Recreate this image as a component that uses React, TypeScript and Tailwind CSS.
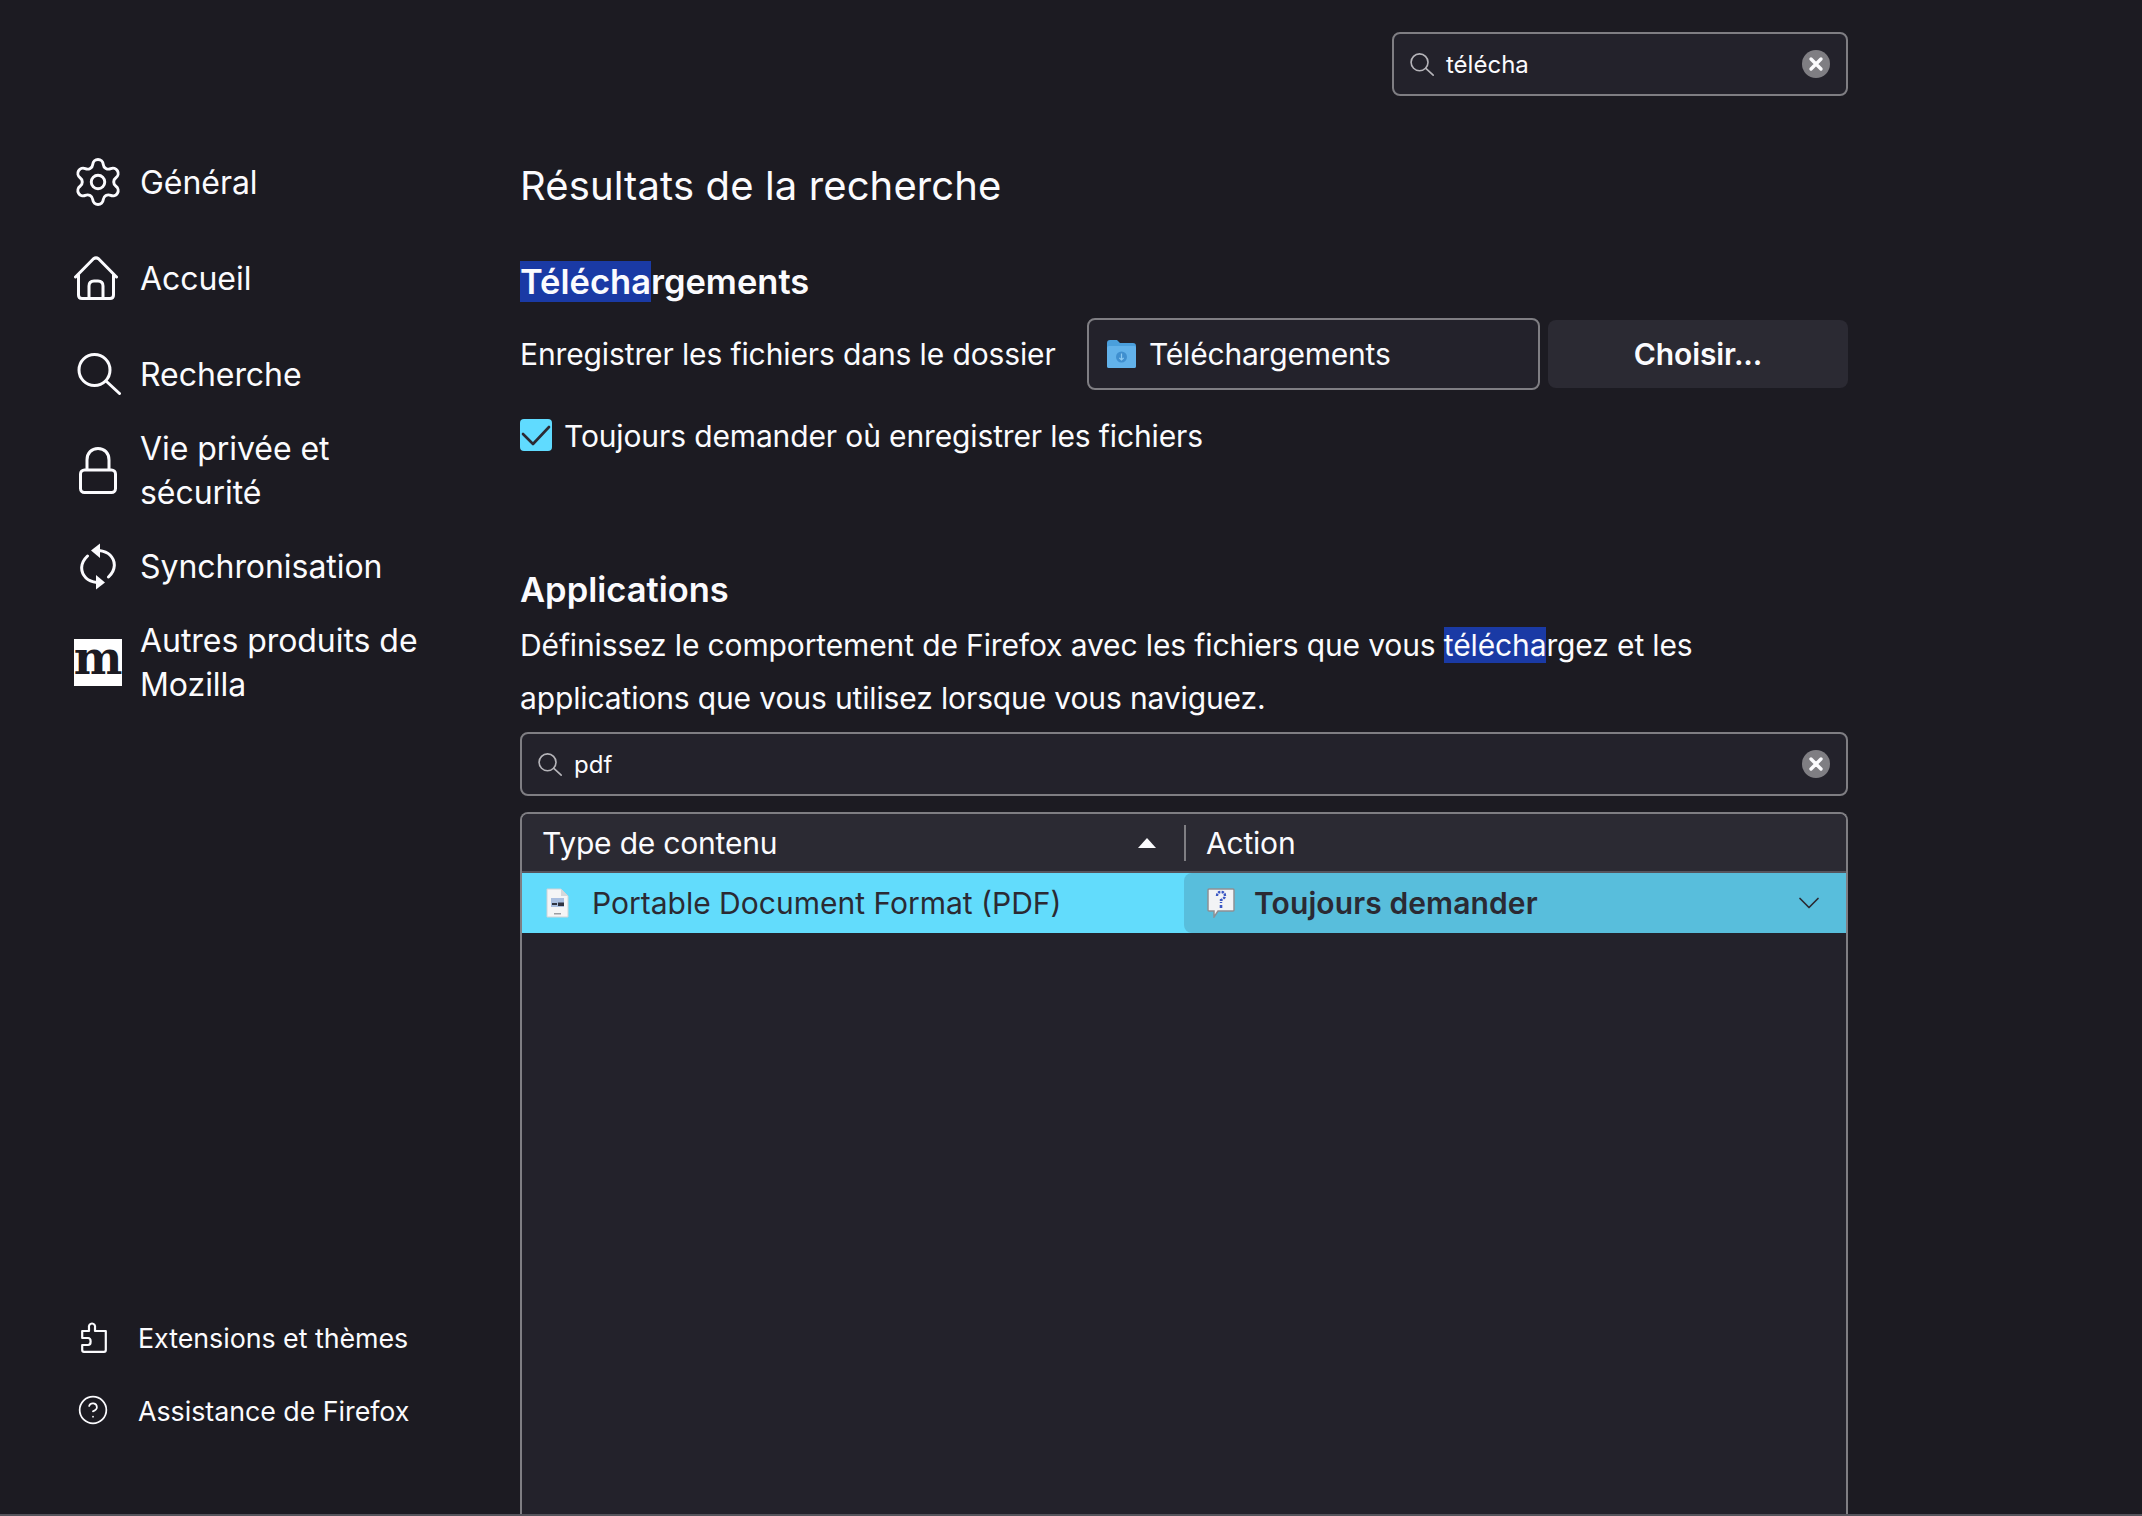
import { CircleHelp, Settings, ChevronDown } from "lucide-react";

function GlassIcon({ className }: { className: string }) {
  return (
    <svg viewBox="0 0 44 42" className={className} fill="none" stroke="currentColor" strokeWidth="3" strokeLinecap="round">
      <circle cx="17.5" cy="17" r="15.5" />
      <path d="M29 28 L42.5 40.5" />
    </svg>
  );
}

function HomeIcon() {
  return (
    <svg viewBox="0 0 44 44" className="w-[44px] h-[44px] -ml-[4px]" fill="none" stroke="currentColor" strokeWidth="3" strokeLinecap="round" strokeLinejoin="round">
      <path d="M1.5 21 L19.5 2.8 Q22 1 24.5 2.8 L42.5 21" />
      <path d="M4.5 19 V39 Q4.5 42.5 8 42.5 H36 Q39.5 42.5 39.5 39 V19" />
      <path d="M15 42 V30 Q15 25 20 25 H24 Q29 25 29 30 V42" />
    </svg>
  );
}

function LockIcon() {
  return (
    <svg viewBox="0 0 38 47" className="w-[38px] h-[47px]" fill="none" stroke="currentColor" strokeWidth="3" strokeLinejoin="round">
      <path d="M8 23 V13 C8 6 12.5 1.5 19 1.5 C25.5 1.5 30 6 30 13 V23" />
      <rect x="1.5" y="23" width="35" height="22.5" rx="4" />
    </svg>
  );
}

function SyncIcon() {
  return (
    <svg viewBox="0 0 36 47" className="w-[36px] h-[47px]" fill="none" stroke="currentColor" strokeWidth="3" strokeLinecap="round">
      <path d="M7.5 13 C0 20 0 29 6 35 C9 38 13 39 17 39.5" />
      <path d="M28.5 34 C36 27 36 18 30 12 C27 9 23 8 19 7.5" />
      <path d="M20 0.5 L20 15 L11 7.5 Z" fill="currentColor" stroke="none" />
      <path d="M16 32 L16 46.5 L25 39.5 Z" fill="currentColor" stroke="none" />
    </svg>
  );
}

function PuzzleIcon() {
  return (
    <svg viewBox="0 0 26 32" className="w-[26px] h-[32px] ml-[2px]" fill="none" stroke="currentColor" strokeWidth="2.2" strokeLinejoin="round">
      <path d="M1.2 10 H8 V7 C6.8 1 15.2 1 14 7 V10 H24.8 V29 Q24.8 30.8 23 30.8 H3 Q1.2 30.8 1.2 29 V24 H7 C10.5 24 10.5 17 7 17 H1.2 Z" />
    </svg>
  );
}

function ClearButton() {
  return (
    <svg viewBox="0 0 28 28" className="w-[28px] h-[28px] shrink-0">
      <circle cx="14" cy="14" r="14" fill="#7f7e83" />
      <path d="M9 9 L19 19 M19 9 L9 19" stroke="#fbfbfe" strokeWidth="3.4" strokeLinecap="round" />
    </svg>
  );
}

function FolderIcon() {
  return (
    <svg viewBox="0 0 29 28" className="w-[29px] h-[28px] shrink-0">
      <path d="M0 3 Q0 0 3 0 H10 L13 3 H26 Q29 3 29 6 V26 Q29 28 27 28 H2 Q0 28 0 26 Z" fill="#4a9fdc" />
      <rect x="0" y="6" width="29" height="22" rx="2" fill="#62b2ea" />
      <circle cx="14.5" cy="17" r="5.5" fill="#3f8fcf" />
      <path d="M14.5 13.5 V19.5 M12.3 17.8 L14.5 20 L16.7 17.8" stroke="#8ccaf2" strokeWidth="1.2" fill="none" />
    </svg>
  );
}

function PdfIcon() {
  return (
    <svg viewBox="0 0 23 30" className="w-[23px] h-[30px] shrink-0">
      <path d="M1 1 H15 L22 8 V29 H1 Z" fill="#f4f5f6" stroke="#cfd3d6" strokeWidth="1" />
      <path d="M15 1 V8 H22 Z" fill="#d4d8db" />
      <rect x="5" y="10" width="13" height="9" fill="#a9bfe0" />
      <rect x="6" y="15" width="5" height="2" fill="#2f3340" />
      <rect x="12" y="14.5" width="6" height="3.5" fill="#2f3340" />
      <rect x="8" y="25" width="7" height="1.5" fill="#9a9ea3" />
    </svg>
  );
}

function BubbleIcon() {
  return (
    <svg viewBox="0 0 28 30" className="w-[28px] h-[30px] shrink-0">
      <path d="M2 1 H26 Q27 1 27 2 V22 Q27 23 26 23 H11 L7 29 V23 H2 Q1 23 1 22 V2 Q1 1 2 1 Z" fill="#f2f3f5" stroke="#8d9094" strokeWidth="1.5" />
      <path d="M10 8 Q10 4 14 4 Q18 4 18 8 Q18 10 14 12 V15" stroke="#3b57c4" strokeWidth="2.4" fill="none" strokeDasharray="2.4 1" />
      <rect x="12.7" y="17" width="2.6" height="3" fill="#3b57c4" />
    </svg>
  );
}

function NavItem({ icon, label }: { icon: React.ReactNode; label: React.ReactNode }) {
  return (
    <div className="h-[96px] flex items-center">
      <div className="w-[48px] h-[60px] ml-[74px] mr-[18px] flex items-center justify-center shrink-0">{icon}</div>
      <span className="text-[32px] leading-[44px] w-[300px] pt-[2px] tracking-[-0.05px]">{label}</span>
    </div>
  );
}

function FooterItem({ icon, label }: { icon: React.ReactNode; label: string }) {
  return (
    <div className="h-[73px] flex items-center">
      <div className="w-[32px] ml-[77px] mr-[29px] flex justify-center shrink-0">{icon}</div>
      <span className="text-[26.8px] leading-[40px] pt-[2px] tracking-[-0.03px]">{label}</span>
    </div>
  );
}

export default function App() {
  return (
    <div className="h-[1516px] w-[2142px] overflow-hidden flex flex-col bg-[#1c1b22] text-[#fbfbfe] font-['Inter',sans-serif]">
      <div className="flex-1 min-h-0 flex">
        <aside className="w-[520px] shrink-0 flex flex-col justify-between pt-[134px] pb-[68px]">
          <nav className="flex flex-col">
            <NavItem icon={<Settings className="w-[54px] h-[58px] shrink-0" strokeWidth={1.3} />} label="Général" />
            <NavItem icon={<HomeIcon />} label="Accueil" />
            <NavItem icon={<GlassIcon className="w-[44px] h-[42px] ml-[2px]" />} label="Recherche" />
            <NavItem icon={<LockIcon />} label="Vie privée et sécurité" />
            <NavItem icon={<SyncIcon />} label="Synchronisation" />
            <NavItem
              icon={
                <div className="w-[48px] h-[47px] bg-white flex items-center justify-center">
                  <span className="font-['DejaVu_Serif',serif] font-bold text-[46px] leading-[47px] text-[#1c1b22] -mt-[8px]">m</span>
                </div>
              }
              label="Autres produits de Mozilla"
            />
          </nav>
          <div className="flex flex-col">
            <FooterItem icon={<PuzzleIcon />} label="Extensions et thèmes" />
            <FooterItem icon={<CircleHelp className="w-[36px] h-[36px]" strokeWidth={1.3} />} label="Assistance de Firefox" />
          </div>
        </aside>

        <main className="w-[1328px] shrink-0 flex flex-col pt-[32px]">
          <div className="flex justify-end">
            <div className="w-[456px] h-[64px] border-2 border-[#7f7e83] rounded-[8px] bg-[#23222b] flex items-center pl-[16px] pr-[16px]">
              <GlassIcon className="w-[24px] h-[23px] text-[#b5b4b9] shrink-0" />
              <span className="ml-[12px] flex-1 text-[24px] leading-[40px] pt-[1px]">télécha</span>
              <ClearButton />
            </div>
          </div>

          <h1 className="mt-[60px] text-[40px] leading-[60px] font-normal tracking-[0.12px]">Résultats de la recherche</h1>

          <h2 className="mt-[44px] text-[34.5px] leading-[44px] font-semibold">
            <span className="bg-[#1a3aa5]">Télécha</span>rgements
          </h2>

          <div className="mt-[14px] h-[72px] flex items-center text-[30px] tracking-[-0.12px]">
            <span className="w-[567px] shrink-0 pt-[1px]">Enregistrer les fichiers dans le dossier</span>
            <div className="w-[453px] h-[72px] border-2 border-[#7f7e83] rounded-[8px] bg-[#23222b] flex items-center pl-[18px]">
              <FolderIcon />
              <span className="ml-[13px] pt-[1px] tracking-[-0.2px]">Téléchargements</span>
            </div>
            <button className="ml-[8px] w-[300px] h-[68px] rounded-[8px] bg-[#2b2a33] font-semibold text-[30px] pt-[1px]">Choisir...</button>
          </div>

          <div className="mt-[29px] flex items-center text-[30px] tracking-[-0.13px] h-[32px]">
            <div className="w-[32px] h-[32px] rounded-[4px] bg-[#60dbff] flex items-center justify-center shrink-0">
              <svg viewBox="0 0 32 32" className="w-[32px] h-[32px]" fill="none" stroke="#2b2a33" strokeWidth="2.6" strokeLinecap="round" strokeLinejoin="round">
                <path d="M3 15 L13 25 L29 8" />
              </svg>
            </div>
            <span className="ml-[12px] pt-[2px]">Toujours demander où enregistrer les fichiers</span>
          </div>

          <h2 className="mt-[117px] text-[34.5px] leading-[44px] font-semibold">Applications</h2>

          <p className="mt-[7px] text-[30px] tracking-[-0.13px] leading-[52.5px]">
            Définissez le comportement de Firefox avec les fichiers que vous <span className="bg-[#1a3aa5]">télécha</span>rgez et les applications que vous utilisez lorsque vous naviguez.
          </p>

          <div className="mt-[8px] h-[64px] border-2 border-[#7f7e83] rounded-[8px] bg-[#23222b] flex items-center pl-[16px] pr-[16px] shrink-0">
            <GlassIcon className="w-[24px] h-[23px] text-[#b5b4b9] shrink-0" />
            <span className="ml-[12px] flex-1 text-[24px] leading-[40px] pt-[1px]">pdf</span>
            <ClearButton />
          </div>

          <div className="mt-[16px] flex-1 min-h-0 border-2 border-b-0 border-[#7f7e83] rounded-t-[8px] bg-[#23222b] flex flex-col overflow-hidden">
            <div className="h-[59px] shrink-0 bg-[#2b2a33] border-b-2 border-[#55545c] flex items-center text-[30px] tracking-[-0.2px]">
              <div className="w-[662px] pl-[20px] pr-[28px] flex items-center justify-between shrink-0">
                <span className="pt-[1px]">Type de contenu</span>
                <svg viewBox="0 0 18 10" className="w-[18px] h-[10px]"><path d="M9 0 L18 10 H0 Z" fill="#fbfbfe" /></svg>
              </div>
              <div className="h-[36px] border-l-2 border-[#7f7e83] pl-[20px] flex items-center pt-[1px]">Action</div>
            </div>
            <div className="h-[60px] shrink-0 bg-[#62dcfc] text-[#2b2a33] flex items-center text-[30px]">
              <div className="w-[662px] pl-[24px] flex items-center shrink-0">
                <PdfIcon />
                <span className="ml-[23px] pt-[1px]">Portable Document Format (PDF)</span>
              </div>
              <div className="flex-1 h-full bg-[#58bedc] rounded-l-[8px] flex items-center pl-[23px] pr-[19px]">
                <BubbleIcon />
                <span className="ml-[19px] flex-1 font-semibold pt-[1px] tracking-[0.1px]">Toujours demander</span>
                <ChevronDown className="w-[36px] h-[36px]" strokeWidth={1.15} />
              </div>
            </div>
          </div>
        </main>
      </div>
      <div className="h-[2px] bg-[#55545c] shrink-0" />
    </div>
  );
}
